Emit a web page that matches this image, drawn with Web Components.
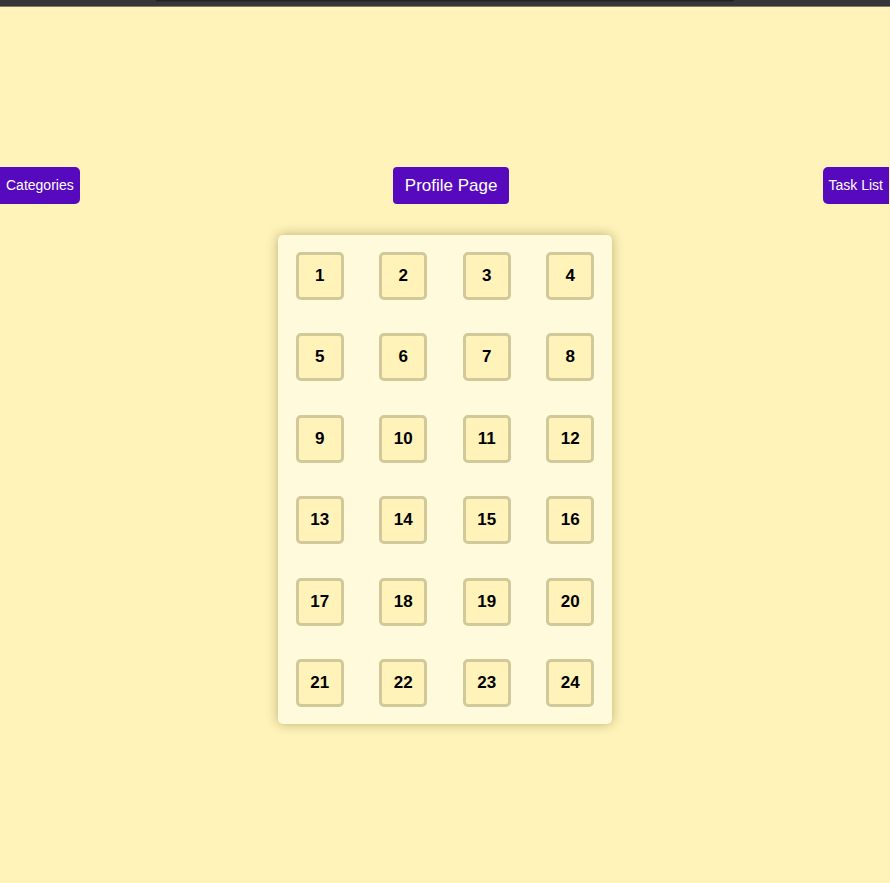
<!DOCTYPE html>
<html lang="en">
<head>
<meta charset="utf-8">
<meta name="viewport" content="width=device-width, initial-scale=1">
<title>Profile Page</title>
<style>
  html { background: #fff3ba; }
  body { margin: 0; font-family: "Liberation Sans", Arial, sans-serif; color: #000; }
</style>
</head>
<body>
<app-page>
  <window-edge slot="edge"></window-edge>
  <nav-bar slot="nav">
    <nav-button side="left">Categories</nav-button>
    <nav-button side="center">Profile Page</nav-button>
    <nav-button side="right">Task List</nav-button>
  </nav-bar>
  <day-board count="24"></day-board>
</app-page>
<script>
  class BaseElement extends HTMLElement {
    constructor() {
      super();
      this.attachShadow({ mode: "open" }).innerHTML = this.constructor.template;
    }
  }

  class AppPage extends BaseElement {
    static template = `
      <style>
        :host { display: flex; flex-direction: column; min-height: 100vh; background: #fff3ba; }
        main { display: flex; justify-content: center; padding: 31px 0; }
      </style>
      <slot name="edge"></slot>
      <slot name="nav"></slot>
      <main><slot></slot></main>`;
  }

  class WindowEdge extends BaseElement {
    static template = `
      <style>
        :host { display: block; box-sizing: border-box; height: 7px; background: #35363a; border-bottom: 1px solid #837c69; }
        div { width: 65%; height: 1px; margin: 0 auto; background: #202124; border-bottom: 1px solid #2b2c30; border-radius: 0 0 2px 2px; }
      </style>
      <div></div>`;
  }

  class NavBar extends BaseElement {
    static template = `
      <style>
        :host { display: block; padding: 160px 1px 0 0; }
        nav { display: flex; justify-content: space-between; align-items: flex-start; }
      </style>
      <nav><slot></slot></nav>`;
  }

  class NavButton extends BaseElement {
    static template = `
      <style>
        :host { display: block; }
        button {
          display: block; margin: 0; border: 0; padding: 8px 6px;
          background: #5609bd; color: #fff; cursor: pointer;
          font: 14px/21px "Liberation Sans", Arial, sans-serif;
          border-radius: 5px;
        }
        :host([side="left"]) button { border-radius: 0 5px 5px 0; }
        :host([side="right"]) button { border-radius: 5px 0 0 5px; }
        :host([side="center"]) button { padding: 8px 12px; font-size: 17px; border-radius: 4px; }
      </style>
      <button type="button"><slot></slot></button>`;
  }

  class DayTile extends BaseElement {
    static template = `
      <style>
        :host { display: block; }
        button {
          display: block; box-sizing: border-box; width: 48px; height: 48px;
          margin: 0; padding: 0; border: 3px solid #d2c99a; border-radius: 5px;
          background: #fff3ba; color: #000; cursor: pointer;
          font: bold 17px/20px "Liberation Sans", Arial, sans-serif;
        }
      </style>
      <button type="button"><slot></slot></button>`;
  }

  class DayBoard extends BaseElement {
    static template = `
      <style>
        :host {
          display: grid; grid-template-columns: repeat(4, 1fr);
          grid-auto-rows: 1fr; width: 38%; max-width: 334px; min-width: 240px; min-height: 489px;
          place-items: center; box-sizing: border-box;
          background: #fffadc; border-radius: 5px;
          box-shadow: 0 0 12px rgba(80, 75, 0, 0.4);
        }
      </style>`;
    connectedCallback() {
      if (this.shadowRoot.querySelector("day-tile")) return;
      const count = Number(this.getAttribute("count"));
      for (let day = 1; day <= count; day++) {
        const tile = document.createElement("day-tile");
        tile.textContent = day;
        this.shadowRoot.append(tile);
      }
    }
  }

  customElements.define("day-tile", DayTile);
  customElements.define("day-board", DayBoard);
  customElements.define("nav-button", NavButton);
  customElements.define("nav-bar", NavBar);
  customElements.define("window-edge", WindowEdge);
  customElements.define("app-page", AppPage);
</script>
</body>
</html>
